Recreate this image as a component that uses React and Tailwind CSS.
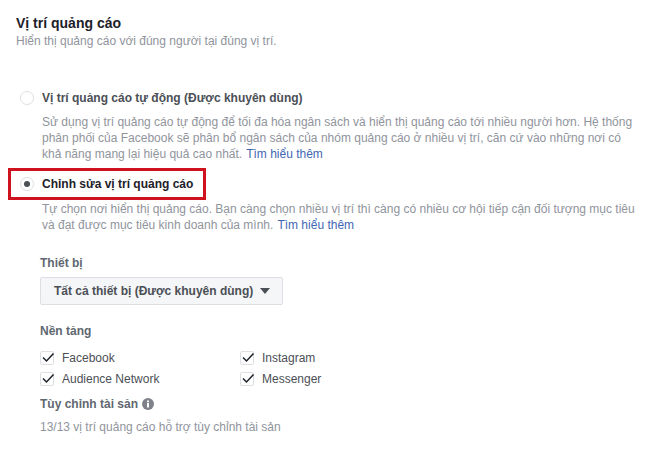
import React from "react";

const Radio = ({ checked }) => (
  <span className="w-[14px] h-[14px] shrink-0 rounded-full bg-white border border-[#dddfe2] flex items-center justify-center">
    {checked && <span className="w-[6px] h-[6px] rounded-full bg-[#4b4f56]"></span>}
  </span>
);

const Check = ({ label }) => (
  <div className="flex items-center h-[21px]">
    <span className="w-[14px] h-[14px] border border-[#dddfe2] bg-white rounded-[2px] relative mr-[8px]">
      <svg className="absolute left-0 -top-[2px]" width="14" height="14" viewBox="0 0 14 14" fill="none">
        <path d="M2 7.5L5.5 11L12.5 3.5" stroke="#1d2129" strokeWidth="1.5" />
      </svg>
    </span>
    <span className="text-[12px] text-[#4b4f56]">{label}</span>
  </div>
);

const Link = () => <a className="text-[#4267b2] ml-[4px]">Tìm hiểu thêm</a>;

export default function App() {
  return (
    <div className="w-[657px] h-[451px] bg-white overflow-hidden pt-[14px] pl-[16px] font-['Liberation_Sans',Arial,sans-serif]">
      {/* Header */}
      <h1 className="text-[14px] leading-[18px] font-bold text-[#1d2129]">Vị trí quảng cáo</h1>
      <p className="text-[12px] leading-[18px] text-[#90949c]">Hiển thị quảng cáo với đúng người tại đúng vị trí.</p>

      {/* Auto placements */}
      <div className="mt-[40px] flex items-center gap-[8px] pl-[4px] h-[16px]">
        <Radio />
        <span className="text-[12px] font-bold text-[#4b4f56]">Vị trí quảng cáo tự động (Được khuyên dùng)</span>
      </div>
      <p className="mt-[8px] ml-[26px] w-[600px] text-[12px] leading-[16px] text-[#90949c]">
        Sử dụng vị trí quảng cáo tự động để tối đa hóa ngân sách và hiển thị quảng cáo tới nhiều người hơn. Hệ thống
        <br />
        phân phối của Facebook sẽ phân bổ ngân sách của nhóm quảng cáo ở nhiều vị trí, căn cứ vào những nơi có
        <br />
        khả năng mang lại hiệu quả cao nhất.
        <Link />
      </p>

      {/* Edit placements */}
      <div className="-ml-[8px] mt-[6px] w-[198px] h-[32px] border-[3px] border-[#d0121f] flex items-center gap-[8px] pl-[9px]">
        <Radio checked />
        <span className="text-[12px] font-bold text-[#1d2129]">Chỉnh sửa vị trí quảng cáo</span>
      </div>
      <p className="mt-[1px] ml-[26px] w-[600px] text-[12px] leading-[16px] text-[#90949c]">
        Tự chọn nơi hiển thị quảng cáo. Bạn càng chọn nhiều vị trí thì càng có nhiều cơ hội tiếp cận đối tượng mục tiêu
        <br />
        và đạt được mục tiêu kinh doanh của mình.
        <Link />
      </p>

      <div className="ml-[24px]">
        <div className="mt-[22px] text-[12px] leading-[16px] font-bold text-[#606770]">Thiết bị</div>
        <button className="mt-[6px] w-[243px] h-[28px] bg-[#f5f6f7] border border-[#dddfe2] rounded-[2px] flex items-center pl-[13px] text-[12px] font-bold text-[#4b4f56]">
          Tất cả thiết bị (Được khuyên dùng)
          <span className="ml-[7px] -mt-[1px] w-0 h-0 border-x-[5px] border-x-transparent border-t-[6px] border-t-[#4b4f56]"></span>
        </button>

        <div className="mt-[18px] text-[12px] leading-[16px] font-bold text-[#606770]">Nền tảng</div>
        <div className="mt-[8px] grid grid-cols-[200px_200px]">
          <Check label="Facebook" />
          <Check label="Instagram" />
          <Check label="Audience Network" />
          <Check label="Messenger" />
        </div>

        <div className="mt-[7px] flex items-center gap-[4px] text-[12px] leading-[16px] font-bold text-[#606770]">
          Tùy chỉnh tài sản
          <svg width="12" height="12" viewBox="0 0 12 12">
            <circle cx="6" cy="6" r="6" fill="#7f8389" />
            <rect x="5" y="5" width="2" height="4.5" fill="#fff" />
            <rect x="5" y="2.5" width="2" height="1.7" fill="#fff" />
          </svg>
        </div>
        <div className="mt-[7px] text-[12px] leading-[16px] text-[#90949c]">13/13 vị trí quảng cáo hỗ trợ tùy chỉnh tài sản</div>
      </div>
    </div>
  );
}
